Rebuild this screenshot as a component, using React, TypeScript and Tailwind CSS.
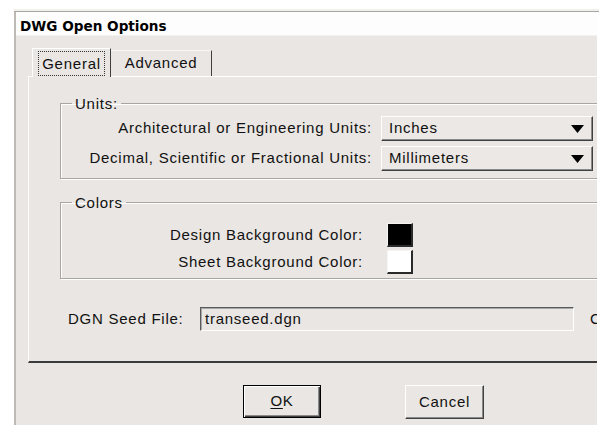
import React from "react";

const raised =
  "border-t border-l border-t-white border-l-white border-r border-b border-r-[#404040] border-b-[#404040] shadow-[inset_-1px_-1px_0_#8a8a8a]";

const ArrowDown = () => (
  <svg width="13" height="8" viewBox="0 0 13 8" className="block">
    <polygon points="0,0 13,0 6.5,8" fill="#000" />
  </svg>
);

const Dropdown = ({ value }: { value: string }) => (
  <div
    className={`w-[212px] h-[25px] bg-[#ebe8e5] flex items-center justify-between pl-[7px] pr-[8px] ${raised}`}
  >
    <span>{value}</span>
    <ArrowDown />
  </div>
);

const Swatch = ({ color }: { color: string }) => (
  <div
    className={`w-[26px] h-[24px] border-r-2 border-b-2 border-r-[#2a2a2a] border-b-[#2a2a2a] border-t border-l border-t-[#f4f4f4] border-l-[#f4f4f4] ${color}`}
  />
);

const GroupBox = ({
  title,
  className,
  children,
}: {
  title: string;
  className: string;
  children: React.ReactNode;
}) => (
  <fieldset
    className={`ml-[31px] w-[600px] border border-[#a8a6a3] shadow-[inset_1px_1px_0_#fff,1px_1px_0_#fff] ${className}`}
  >
    <legend className="ml-[11px] px-[3px] leading-[17px]">{title}</legend>
    {children}
  </fieldset>
);

export default function App() {
  return (
    <div className="w-[599px] h-[425px] overflow-hidden bg-white pt-[9px] font-['Liberation_Sans',Arial,sans-serif] text-[15px] tracking-[0.75px] text-[#111]">
      <div className="h-[3px] ml-[14px] bg-[#f1f1ea] border-b border-b-[#a6a6a6]" />
      <div className="ml-[14px] w-[583px] h-[413px] overflow-hidden border-l-2 border-l-[#bdbab6] bg-[#e9e6e3]">
        {/* title bar */}
        <div className="h-[24px] bg-[#fdfdfd] border-b border-b-[#f1f1f1] pl-[4px] pt-[5px] flex items-center font-['DejaVu_Sans',sans-serif] font-bold text-[13.6px] tracking-normal text-black">
          DWG Open Options
        </div>

        <div className="ml-[12px] mt-[12px]">
          {/* tabs */}
          <div className="flex items-end h-[28px] pl-[4px]">
            <div className="relative z-10 -mb-px h-[29px] w-[79px] bg-[#e9e6e3] border-t border-l border-t-white border-l-white border-r border-r-[#404040] flex items-center justify-center">
              <span className="border border-dotted border-[#333] px-[3px] h-[25px] leading-[23px]">
                General
              </span>
            </div>
            <div className="h-[26px] w-[101px] border-t border-t-[#f7f7f7] border-r border-r-[#404040] flex items-center justify-center">
              Advanced
            </div>
          </div>

          {/* tab page */}
          <div className="w-[700px] h-[287px] border-t border-l border-t-white border-l-white border-b-2 border-b-[#3b3b3b] pt-[18px]">
            <GroupBox title="Units:" className="pb-[7px]">
              <div className="mt-[4px] flex flex-col gap-[5px]">
                <div className="flex items-center">
                  <span className="w-[311px] text-right">
                    Architectural or Engineering Units:
                  </span>
                  <div className="ml-[9px]">
                    <Dropdown value="Inches" />
                  </div>
                </div>
                <div className="flex items-center">
                  <span className="w-[311px] text-right">
                    Decimal, Scientific or Fractional Units:
                  </span>
                  <div className="ml-[9px]">
                    <Dropdown value="Millimeters" />
                  </div>
                </div>
              </div>
            </GroupBox>

            <GroupBox title="Colors" className="mt-[15px] pb-[4px]">
              <div className="mt-[12px] flex flex-col gap-[3px]">
                <div className="flex items-center">
                  <span className="w-[302px] text-right">
                    Design Background Color:
                  </span>
                  <div className="ml-[24px]">
                    <Swatch color="bg-black" />
                  </div>
                </div>
                <div className="flex items-center">
                  <span className="w-[302px] text-right">
                    Sheet Background Color:
                  </span>
                  <div className="ml-[24px]">
                    <Swatch color="bg-white" />
                  </div>
                </div>
              </div>
            </GroupBox>

            <div className="mt-[28px] ml-[39px] flex items-center">
              <span className="w-[122px]">DGN Seed File:</span>
              <div className="ml-[10px] w-[374px] h-[24px] border-t border-l border-t-[#5a5a5a] border-l-[#5a5a5a] border-r border-b border-r-white border-b-white shadow-[inset_1px_1px_0_#a8a8a8] flex items-center pl-[4px]">
                transeed.dgn
              </div>
              <span className="ml-[16px]">C</span>
            </div>
          </div>

          {/* dialog buttons */}
          <div className="mt-[22px] ml-[215px] flex gap-[84px]">
            <button className="w-[78px] h-[33px] border border-black shadow-[inset_1px_1px_0_#fff,inset_-1px_-1px_0_#404040,inset_-2px_-2px_0_#8a8a8a] bg-[#e9e6e3] flex items-center justify-center">
              <span>
                <span className="underline underline-offset-2">O</span>K
              </span>
            </button>
            <button
              className={`w-[79px] h-[34px] bg-[#e9e6e3] flex items-center justify-center ${raised}`}
            >
              Cancel
            </button>
          </div>
        </div>
      </div>
    </div>
  );
}
